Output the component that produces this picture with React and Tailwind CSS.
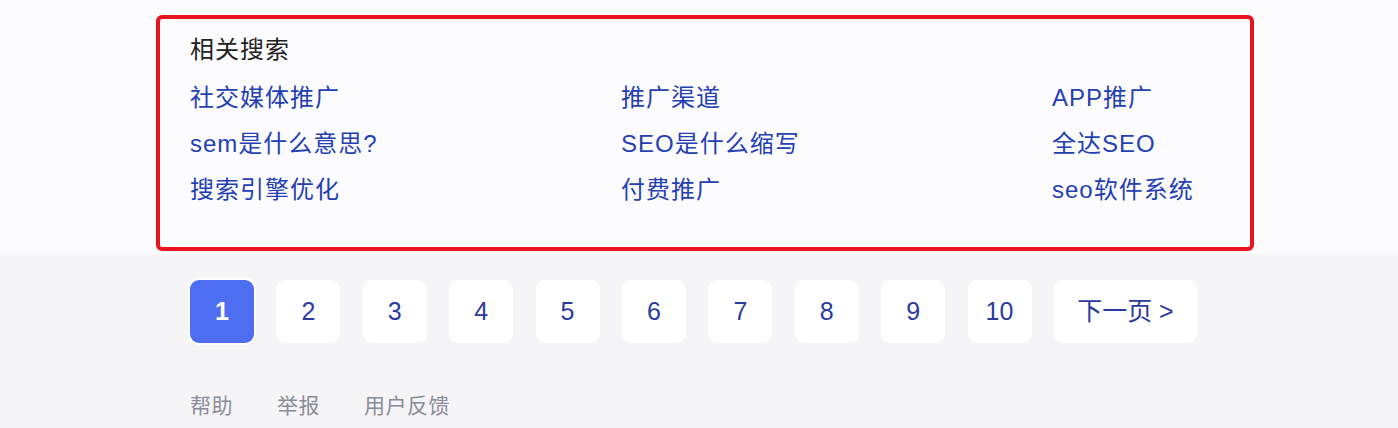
import React from "react";

const links = [
  "社交媒体推广", "推广渠道", "APP推广",
  "sem是什么意思?", "SEO是什么缩写", "全达SEO",
  "搜索引擎优化", "付费推广", "seo软件系统",
];

const pages = [1, 2, 3, 4, 5, 6, 7, 8, 9, 10];

export default function App() {
  return (
    <div className="w-[1398px] h-[428px] overflow-hidden bg-[#f5f5f7] font-['Liberation_Sans','Noto_Sans_CJK_SC',sans-serif]">
      {/* Related searches */}
      <div className="bg-[#fcfcfe] pt-[15px] pl-[156px] pb-[3px]">
        <div className="w-[1098px] border-4 border-[#e8141b] rounded-[6px] pt-[15px] pb-[34px] pl-[30px]">
          <h3 className="text-[24px] tracking-[1px] leading-[32px] text-[#222]">相关搜索</h3>
          <div className="grid grid-cols-[431px_431px_200px] mt-[9px]">
            {links.map((t) => (
              <a key={t} href="#" className="text-[24px] tracking-[1px] leading-[46px] text-[#2440b3] whitespace-nowrap">
                {t}
              </a>
            ))}
          </div>
        </div>
      </div>

      {/* Pagination */}
      <div className="pl-[190px] pt-[26px] flex gap-[22.4px]">
        {pages.map((p) => (
          <a
            key={p}
            href="#"
            className={
              p === 1
                ? "w-[64px] h-[63px] rounded-[9px] bg-[#4e6ef2] text-white font-bold text-[25px] flex items-center justify-center ring-2 ring-white"
                : "w-[64px] h-[63px] rounded-[9px] bg-white text-[#2b3aa0] text-[25px] flex items-center justify-center"
            }
          >
            {p}
          </a>
        ))}
        <a href="#" className="w-[143px] h-[63px] rounded-[9px] bg-white text-[#2b3aa0] text-[25px] flex items-center justify-center">
          下一页 &gt;
        </a>
      </div>

      {/* Footer */}
      <div className="pl-[190px] mt-[49px] flex gap-[44px] text-[21px] tracking-[0.5px] leading-[28px] text-[#8a8d99]">
        <a href="#">帮助</a>
        <a href="#">举报</a>
        <a href="#">用户反馈</a>
      </div>
    </div>
  );
}
